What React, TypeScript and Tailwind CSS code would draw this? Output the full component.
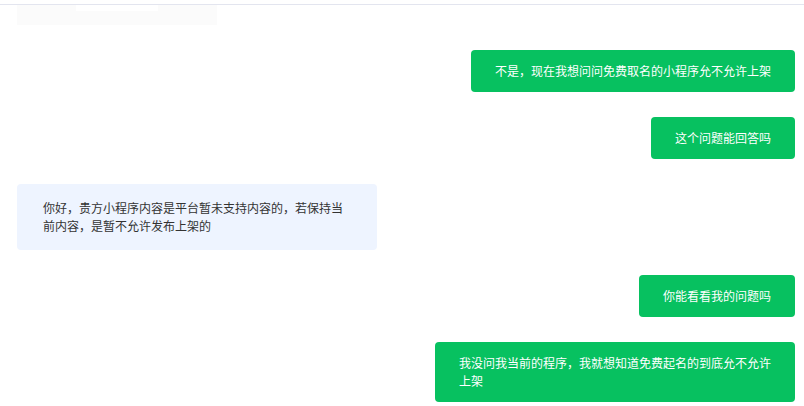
import React from "react";

const font = { fontFamily: '"Noto Sans CJK SC", "Noto Sans", sans-serif' };

function Mine({ text }: { text: string }) {
  return (
    <div className="flex justify-end">
      <div className="max-w-[360px] rounded bg-[#07c160] px-6 py-3 text-[12px] leading-[18px] text-white">
        {text}
      </div>
    </div>
  );
}

function Theirs({ text }: { text: string }) {
  return (
    <div className="flex justify-start">
      <div className="w-[360px] rounded bg-[#eef4ff] px-[26px] py-[15px] text-[12px] leading-[18px] text-[#333333]">
        {text}
      </div>
    </div>
  );
}

export default function App() {
  return (
    <div className="h-[406px] w-[804px] overflow-hidden bg-white" style={font}>
      <div className="h-[4px] bg-white" />
      <div className="border-t border-[#e3e5ef]" />
      <div className="flex flex-col gap-[25px] pl-[17px] pr-[9px]">
        <div className="flex h-[20px] w-[200px] items-start bg-[#fbfbfb]">
          <div className="ml-[59px] h-[6px] w-[82px] bg-white" />
        </div>
        <Mine text="不是，现在我想问问免费取名的小程序允不允许上架" />
        <Mine text="这个问题能回答吗" />
        <Theirs text="你好，贵方小程序内容是平台暂未支持内容的，若保持当前内容，是暂不允许发布上架的" />
        <Mine text="你能看看我的问题吗" />
        <Mine text="我没问我当前的程序，我就想知道免费起名的到底允不允许上架" />
      </div>
    </div>
  );
}
